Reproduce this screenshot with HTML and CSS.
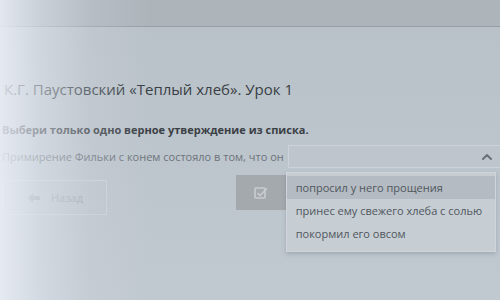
FILE: index.html
```html
<!DOCTYPE html>
<html lang="ru">
<head>
    <meta charset="UTF-8">
    <meta name="viewport" content="width=device-width, initial-scale=1.0">
    <title>Теплый хлеб. Урок 1</title>
    <link rel="stylesheet" href="styles.css">
</head>
<body>
    <div class="topbar"></div>
    <main class="lesson">
        <h1 class="lesson-title">К.Г. Паустовский «Теплый хлеб». Урок 1</h1>
        <p class="task">Выбери только одно верное утверждение из списка.</p>
        <div class="question">
            <span class="question-text">Примирение Фильки с конем состояло в том, что он</span>
            <div class="select">
                <svg class="chevron" width="12" height="8" viewBox="0 0 12 8" fill="none" stroke="currentColor" stroke-width="2" stroke-linecap="round" stroke-linejoin="round"><path d="M2 6l4-4 4 4"/></svg>
                <ul class="options">
                    <li class="option active">попросил у него прощения</li>
                    <li class="option">принес ему свежего хлеба с солью</li>
                    <li class="option">покормил его овсом</li>
                </ul>
            </div>
        </div>
        <div class="actions">
            <button class="back-button">
                <svg width="12" height="10" viewBox="0 0 12 10" fill="currentColor"><path d="M0 5l5-5v3h7v4H5v3z"/></svg>
                Назад
            </button>
            <button class="check-button">
                <svg width="14" height="12" viewBox="0 0 14 12" fill="none" stroke="currentColor" stroke-width="1.6"><rect x="1" y="1" width="10" height="10" rx="1"/><path d="M3.5 6l2.5 2.5L13 1.5"/></svg>
            </button>
        </div>
    </main>
    <div class="glare"></div>
</body>
</html>
```

FILE: styles.css
```css
body, html {
    margin: 0;
    padding: 0;
    height: 100%;
    font-family: 'Open Sans', sans-serif;
    color: #3f454b;
    overflow: hidden;
}
body {
    position: relative;
    background: linear-gradient(to bottom, #b9c1c8, #c0c8d0);
}
/* reflet de lumière sur la gauche de la photo */
.glare {
    position: absolute;
    top: 0;
    left: 0;
    width: 200px;
    height: 100%;
    pointer-events: none;
    background: linear-gradient(to right, rgba(236, 240, 248, 0.85) 0, rgba(226, 231, 240, 0.55) 40px, rgba(210, 216, 224, 0.25) 90px, rgba(195, 202, 210, 0) 150px);
}
.topbar {
    height: 26px;
    border-bottom: 1px solid #979fa5;
    background: #adb5bb;
}
.lesson {
    padding-left: 4px;
}
.lesson-title {
    margin: 52px 0 0;
    font-size: 15px;
    font-weight: 400;
    line-height: 20px;
    color: #393f45;
}
.task {
    margin: 23px 0 0 -2px;
    font-size: 11px;
    font-weight: 700;
    line-height: 16px;
    color: #3a3f45;
}
.question {
    display: flex;
    align-items: center;
    margin: 7px 0 0 -2px;
}
.question-text {
    font-size: 11px;
    line-height: 16px;
    color: #6c737a;
    margin-right: 4px;
}
.select {
    position: relative;
    flex: 1;
    height: 21px;
    border: 1px solid #cdd3d9;
    border-right: none;
    background: #bec5cc;
}
.chevron {
    position: absolute;
    right: 7px;
    top: 7px;
    color: #6a7178;
}
.options {
    position: absolute;
    top: 26px;
    left: -3px;
    width: 208px;
    margin: 0;
    padding: 3px 0 6px;
    list-style: none;
    background: #c6cdd3;
    border: 1px solid #cfd5da;
    box-shadow: 0 2px 4px rgba(70, 80, 90, 0.25);
}
.option {
    height: 23px;
    padding-left: 9px;
    font-size: 11px;
    line-height: 23px;
    color: #50575e;
}
.option.active {
    background: #b4bbc2;
}
.actions {
    display: flex;
    align-items: flex-start;
    margin-top: 7px;
}
.back-button {
    display: flex;
    align-items: center;
    gap: 11px;
    width: 105px;
    height: 35px;
    margin: 5px 0 0 -2px;
    padding-left: 25px;
    border: 1px solid #ccd2d8;
    background: transparent;
    font-family: inherit;
    font-size: 11px;
    color: #a2a9b0;
}
.check-button {
    display: flex;
    align-items: center;
    justify-content: center;
    width: 50px;
    height: 35px;
    margin-left: 129px;
    border: none;
    background: #a4a9ae;
    color: #c9cdd1;
}
```
